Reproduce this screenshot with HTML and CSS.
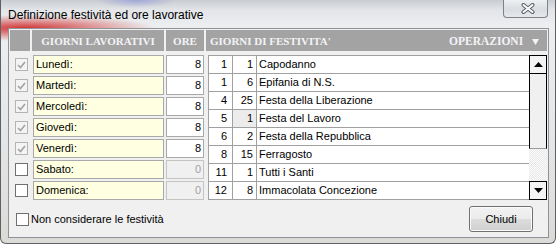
FILE: index.html
```html
<!DOCTYPE html>
<html lang="it">
<head>
    <meta charset="UTF-8">
    <title>Definizione festività ed ore lavorative</title>
    <link rel="stylesheet" href="styles.css">
</head>
<body>
    <div class="window">
        <div class="titlebar">
            <span class="title">Definizione festività ed ore lavorative</span>
            <button class="close" type="button">
                <svg width="14" height="11" viewBox="0 0 14 11">
                    <path d="M2.5 2 L11.5 9 M11.5 2 L2.5 9" stroke="#5b6068" stroke-width="4" stroke-linecap="round"/>
                    <path d="M2.5 2 L11.5 9 M11.5 2 L2.5 9" stroke="#fdfdfd" stroke-width="2" stroke-linecap="round"/>
                </svg>
            </button>
        </div>

        <div class="client">
            <div class="head">
                <div class="head-cell head-check"></div>
                <div class="head-cell head-days">GIORNI LAVORATIVI</div>
                <div class="head-cell head-ore">ORE</div>
                <div class="head-cell head-fest">
                    <span>GIORNI DI FESTIVITA'</span>
                    <span class="ops">OPERAZIONI
                        <svg width="7" height="6" viewBox="0 0 7 6"><path d="M0 0 H7 L3.5 6 Z" fill="#f4f4f4"/></svg>
                    </span>
                </div>
            </div>

            <div class="body">
                <div class="days">
                    <div class="day-row">
                        <div class="check-cell"><span class="check disabled checked"><svg width="9" height="8" viewBox="0 0 9 8"><path d="M1 4 L3.5 6.5 L8 1" fill="none" stroke="#a2a2a2" stroke-width="1.6"/></svg></span></div>
                        <div class="day-box">Lunedì:</div>
                        <div class="ore-box">8</div>
                    </div>
                    <div class="day-row">
                        <div class="check-cell"><span class="check disabled checked"><svg width="9" height="8" viewBox="0 0 9 8"><path d="M1 4 L3.5 6.5 L8 1" fill="none" stroke="#a2a2a2" stroke-width="1.6"/></svg></span></div>
                        <div class="day-box">Martedì:</div>
                        <div class="ore-box">8</div>
                    </div>
                    <div class="day-row">
                        <div class="check-cell"><span class="check disabled checked"><svg width="9" height="8" viewBox="0 0 9 8"><path d="M1 4 L3.5 6.5 L8 1" fill="none" stroke="#a2a2a2" stroke-width="1.6"/></svg></span></div>
                        <div class="day-box">Mercoledì:</div>
                        <div class="ore-box">8</div>
                    </div>
                    <div class="day-row">
                        <div class="check-cell"><span class="check disabled checked"><svg width="9" height="8" viewBox="0 0 9 8"><path d="M1 4 L3.5 6.5 L8 1" fill="none" stroke="#a2a2a2" stroke-width="1.6"/></svg></span></div>
                        <div class="day-box">Giovedì:</div>
                        <div class="ore-box">8</div>
                    </div>
                    <div class="day-row">
                        <div class="check-cell"><span class="check disabled checked"><svg width="9" height="8" viewBox="0 0 9 8"><path d="M1 4 L3.5 6.5 L8 1" fill="none" stroke="#a2a2a2" stroke-width="1.6"/></svg></span></div>
                        <div class="day-box">Venerdì:</div>
                        <div class="ore-box">8</div>
                    </div>
                    <div class="day-row">
                        <div class="check-cell"><span class="check"></span></div>
                        <div class="day-box">Sabato:</div>
                        <div class="ore-box off">0</div>
                    </div>
                    <div class="day-row">
                        <div class="check-cell"><span class="check"></span></div>
                        <div class="day-box">Domenica:</div>
                        <div class="ore-box off">0</div>
                    </div>
                </div>

                <div class="holidays">
                    <div class="htable">
                        <div class="hrow"><span class="c1">1</span><span class="c2">1</span><span class="c3">Capodanno</span></div>
                        <div class="hrow"><span class="c1">1</span><span class="c2">6</span><span class="c3">Epifania di N.S.</span></div>
                        <div class="hrow"><span class="c1">4</span><span class="c2">25</span><span class="c3">Festa della Liberazione</span></div>
                        <div class="hrow"><span class="c1">5</span><span class="c2 sel">1</span><span class="c3">Festa del Lavoro</span></div>
                        <div class="hrow"><span class="c1">6</span><span class="c2">2</span><span class="c3">Festa della Repubblica</span></div>
                        <div class="hrow"><span class="c1">8</span><span class="c2">15</span><span class="c3">Ferragosto</span></div>
                        <div class="hrow"><span class="c1">11</span><span class="c2">1</span><span class="c3">Tutti i Santi</span></div>
                        <div class="hrow"><span class="c1">12</span><span class="c2">8</span><span class="c3">Immacolata Concezione</span></div>
                    </div>
                    <div class="scrollbar">
                        <div class="sb-btn"><svg width="9" height="5" viewBox="0 0 9 5"><path d="M0 5 H9 L4.5 0 Z" fill="#000"/></svg></div>
                        <div class="sb-thumb"></div>
                        <div class="sb-track"></div>
                        <div class="sb-btn"><svg width="9" height="5" viewBox="0 0 9 5"><path d="M0 0 H9 L4.5 5 Z" fill="#000"/></svg></div>
                    </div>
                </div>
            </div>

            <div class="footer">
                <label class="option"><span class="check"></span>Non considerare le festività</label>
                <button class="btn" type="button">Chiudi</button>
            </div>
        </div>
    </div>
</body>
</html>
```

FILE: styles.css
```css
* {
    box-sizing: border-box;
}
body {
    margin: 0;
    font-family: "Liberation Sans", Arial, sans-serif;
    font-size: 11px;
    color: #000;
    background: #fff;
}

/* finestra */
.window {
    width: 556px;
    height: 244px;
    display: flex;
    flex-direction: column;
    border: 1px solid #5d6166;
    border-top: 0;
    border-radius: 0 0 6px 6px;
    background:
        radial-gradient(ellipse 130px 13px at 25px 28px, rgba(208, 44, 44, .95), rgba(208, 44, 44, 0)),
        radial-gradient(ellipse 40px 8px at 135px 0, rgba(120, 130, 220, .5), rgba(120, 130, 220, 0)),
        linear-gradient(180deg, #c9ccd1 0, #e3e5e8 10px, #eceef0 26px, #e4e5e6 60%, #dcdad6 100%);
}
.titlebar {
    height: 28px;
    display: flex;
    align-items: flex-start;
    padding-left: 7px;
}
.title {
    margin-top: 8px;
    font-size: 12px;
    line-height: 14px;
}
.close {
    margin-left: auto;
    margin-right: 7px;
    width: 45px;
    height: 18px;
    padding: 0;
    display: flex;
    align-items: center;
    justify-content: center;
    border: 1px solid #7d8288;
    border-top: 0;
    border-radius: 0 0 4px 4px;
    background: linear-gradient(180deg, #eef0f2, #dadde1 55%, #e6e8ea);
}
.close svg {
    margin-left: 4px;
}

/* area client */
.client {
    height: 210px;
    margin: 0 6px 0 7px;
    display: flex;
    flex-direction: column;
    border: 1px solid #8f9296;
    background: #f0f0f0;
}
.head {
    height: 21px;
    margin: 1px 1px 0;
    display: flex;
    gap: 2px;
    font-family: "Liberation Serif", "Times New Roman", serif;
    font-size: 11px;
    font-weight: bold;
    color: #f3f3f6;
}
.head-cell {
    background: #a3a3a3;
    display: flex;
    align-items: center;
}
.head-check {
    width: 20px;
}
.head-days {
    width: 132px;
    justify-content: center;
}
.head-ore {
    width: 38px;
    justify-content: center;
}
.head-fest {
    flex: 1;
    padding: 0 8px 0 4px;
    justify-content: space-between;
}
.ops {
    font-size: 11.5px;
}
.ops svg {
    margin-left: 6px;
}

.body {
    display: flex;
    margin-top: 4px;
}
.days {
    margin-left: 1px;
}
.day-row {
    display: flex;
    height: 19px;
    margin-bottom: 2px;
}
.check-cell {
    width: 23px;
    display: flex;
    align-items: center;
    padding-left: 5px;
}
.check {
    width: 13px;
    height: 13px;
    display: inline-flex;
    align-items: center;
    justify-content: center;
    border: 1px solid #707070;
    background: #fff;
}
.check.disabled {
    border-color: #b4b4b4;
    background: #f4f4f4;
}
.day-box {
    width: 131px;
    padding-left: 2px;
    line-height: 17px;
    border: 1px solid #a9a9a9;
    background: #ffffe1;
}
.ore-box {
    width: 38px;
    margin-left: 2px;
    padding-right: 2px;
    line-height: 17px;
    text-align: right;
    border: 1px solid #a9a9a9;
    background: #fff;
}
.ore-box.off {
    color: #a3a3a3;
    border-color: #c4c4c4;
    background: #f0f0f0;
}

/* elenco festività */
.holidays {
    display: flex;
    width: 339px;
    margin-left: 4px;
}
.htable {
    flex: 1;
    border-left: 1px solid #a0a0a0;
    border-bottom: 1px solid #a0a0a0;
    background: #fff;
    align-self: flex-start;
}
.hrow {
    display: flex;
    height: 18px;
    line-height: 17px;
    border-top: 1px solid #a0a0a0;
}
.hrow span {
    border-right: 1px solid #a0a0a0;
}
.c1 {
    width: 24px;
    padding-right: 5px;
    text-align: right;
}
.c2 {
    width: 24px;
    padding-right: 3px;
    text-align: right;
}
.c2.sel {
    background: #ececec;
}
.c3 {
    flex: 1;
    padding-left: 2px;
}
.hrow .c3 {
    border-right: 0;
}
.scrollbar {
    width: 18px;
    height: 145px;
    display: flex;
    flex-direction: column;
}
.sb-btn {
    height: 19px;
    display: flex;
    align-items: center;
    justify-content: center;
    border: 1px solid #000;
    background: #f4f4f4;
}
.sb-thumb {
    height: 75px;
    border: 1px solid #000;
    border-top: 0;
    border-bottom-color: #9a9a9a;
    background: #f0f0f0;
}
.sb-track {
    flex: 1;
    background: repeating-conic-gradient(#e8e8e8 0 25%, #fbfbfb 0 50%) 0 0 / 2px 2px;
}

/* pulsanti in basso */
.footer {
    flex: 1;
    display: flex;
    align-items: center;
    padding: 0 15px 1px 7px;
}
.option {
    display: flex;
    align-items: center;
    gap: 2px;
}
.btn {
    margin-left: auto;
    width: 64px;
    height: 26px;
    padding: 0;
    font-family: "Liberation Sans", Arial, sans-serif;
    font-size: 11px;
    color: #000;
    border: 1px solid #707070;
    border-radius: 3px;
    background: linear-gradient(180deg, #f2f2f2 0, #ebebeb 50%, #dddddd 50%, #cfcfcf 100%);
    box-shadow: inset 0 0 0 1px #fbfbfb;
}
```
